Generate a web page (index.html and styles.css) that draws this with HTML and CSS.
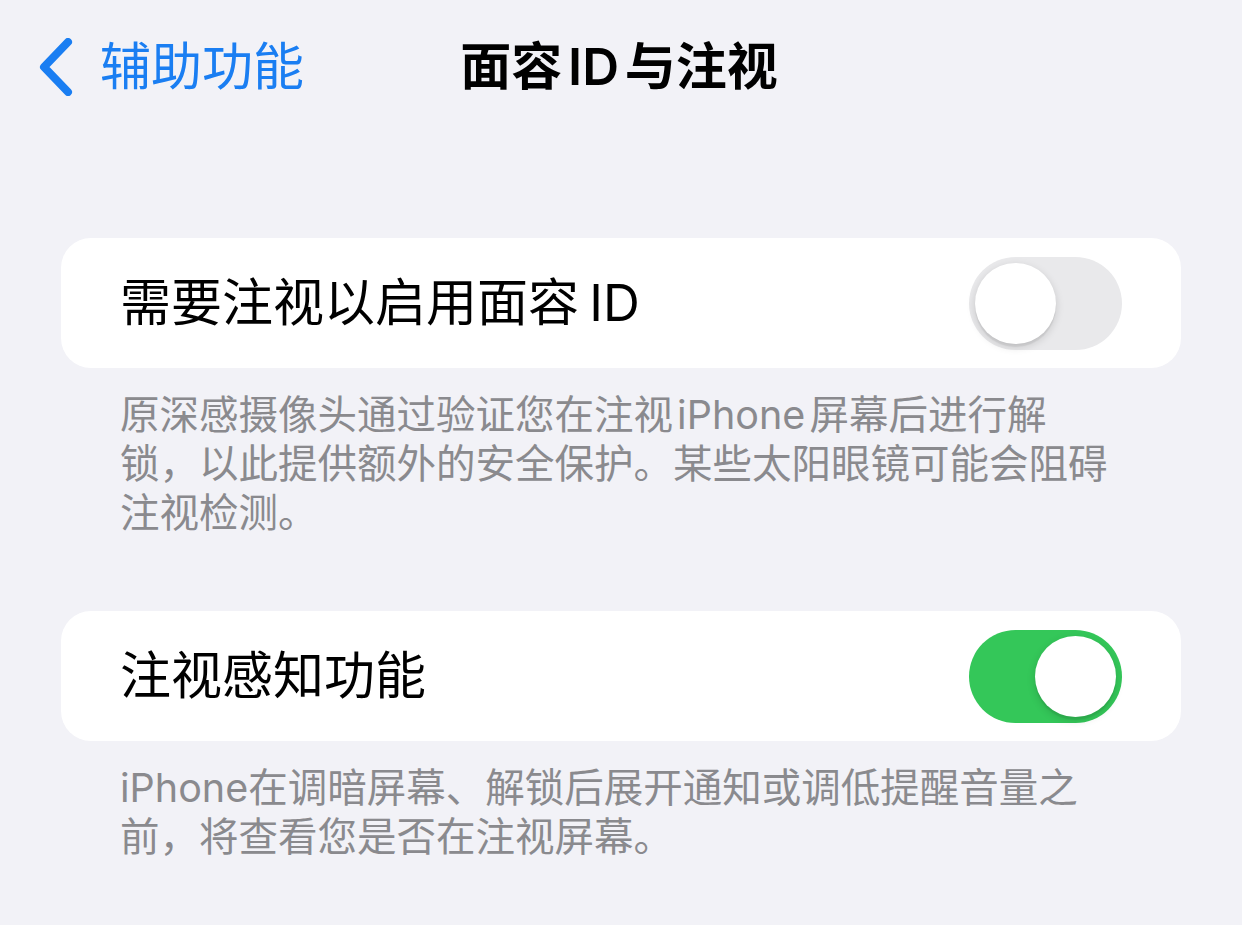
FILE: index.html
```html
<!DOCTYPE html>
<html lang="zh-CN">
<head>
  <meta charset="UTF-8" />
  <meta name="viewport" content="width=device-width, initial-scale=1.0" />
  <title>面容ID与注视</title>
  <link rel="stylesheet" href="styles.css">
</head>
<body>
  <header class="navbar">
    <a class="back" href="#">
      <svg class="chevron" width="36" height="58" viewBox="0 0 36 58">
        <path d="M30 4 L6 29 L30 54" fill="none" stroke="currentColor" stroke-width="8" stroke-linecap="round" stroke-linejoin="round"/>
      </svg>
      <span>辅助功能</span>
    </a>
    <h1 class="title">面容 ID 与注视</h1>
    <div></div>
  </header>

  <main class="settings">
    <section class="group first">
      <div class="card">
        <div class="row">
          <span class="label">需要注视以启用面容 ID</span>
          <span class="switch"><span class="knob"></span></span>
        </div>
      </div>
      <p class="footer">原深感摄像头通过验证您在注视 iPhone 屏幕后进行解锁，以此提供额外的安全保护。某些太阳眼镜可能会阻碍注视检测。</p>
    </section>

    <section class="group">
      <div class="card">
        <div class="row">
          <span class="label">注视感知功能</span>
          <span class="switch on"><span class="knob"></span></span>
        </div>
      </div>
      <p class="footer">iPhone在调暗屏幕、解锁后展开通知或调低提醒音量之前，将查看您是否在注视屏幕。</p>
    </section>
  </main>
</body>
</html>
```

FILE: styles.css
```css
:root {
  --bg-color: #f2f2f7;
  --card-bg: #fff;
  --text-color: #000;
  --muted: #8a8a8e;
  --blue: #1a7ef2;
  --green: #34c759;
  --switch-off: #e9e9eb;
}
body {
  margin: 0;
  background: var(--bg-color);
  color: var(--text-color);
  font-family: "Inter", "Noto Sans CJK SC", sans-serif;
}
.navbar {
  display: grid;
  grid-template-columns: 1fr auto 1fr;
  align-items: center;
  height: 134px;
}
.back {
  display: flex;
  align-items: center;
  gap: 26px;
  padding-left: 38px;
  color: var(--blue);
  text-decoration: none;
  font-size: 51px;
  line-height: 1.2;
}
.chevron {
  display: block;
}
.title {
  margin: 0 0 0 -4px;
  font-size: 51px;
  font-weight: 600;
  line-height: 1.2;
  word-spacing: -7px;
}
.settings {
  padding: 0 61px;
}
.group.first {
  margin-top: 104px;
}
.group {
  margin-top: 73px;
}
.card {
  background: var(--card-bg);
  border-radius: 30px;
}
.row {
  display: flex;
  align-items: center;
  justify-content: space-between;
  height: 130px;
  padding: 0 59px 0 59px;
}
.label {
  font-size: 51px;
  line-height: 1.2;
  word-spacing: -4px;
}
.switch {
  display: flex;
  align-items: center;
  width: 153px;
  height: 93px;
  padding: 0 6px;
  box-sizing: border-box;
  border-radius: 47px;
  background: var(--switch-off);
}
.switch.on {
  justify-content: flex-end;
  background: var(--green);
}
.knob {
  width: 81px;
  height: 81px;
  border-radius: 50%;
  background: #fff;
  box-shadow: 0 3px 8px rgba(0,0,0,0.15), 0 3px 1px rgba(0,0,0,0.06);
}
.footer {
  margin: 23px 0 0;
  padding: 0 59px;
  font-size: 39.5px;
  line-height: 49px;
  color: var(--muted);
  word-spacing: -7px;
}
```
